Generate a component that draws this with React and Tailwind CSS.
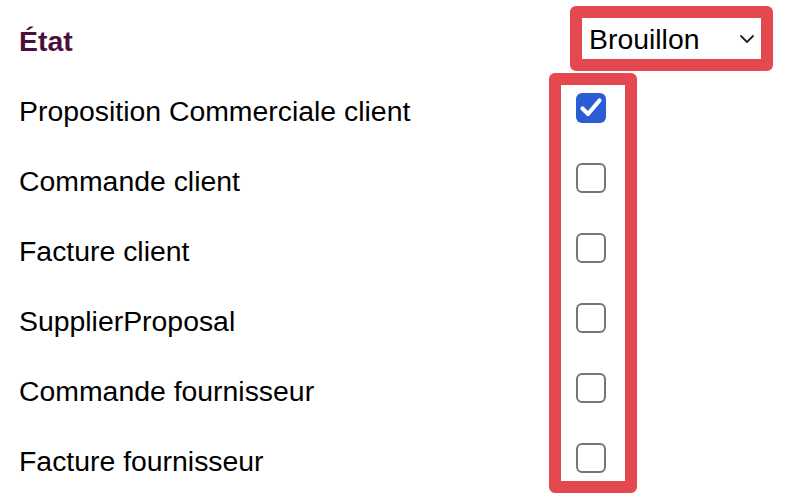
import React from "react";

const rows = [
  { label: "Proposition Commerciale client", checked: true },
  { label: "Commande client", checked: false },
  { label: "Facture client", checked: false },
  { label: "SupplierProposal", checked: false },
  { label: "Commande fournisseur", checked: false },
  { label: "Facture fournisseur", checked: false },
];

function Checkbox({ checked }) {
  if (checked) {
    return (
      <div className="w-[30px] h-[30px] rounded-[6px] bg-[#2a5cd6] flex items-center justify-center">
        <svg width="26" height="26" viewBox="0 0 26 26" fill="none">
          <path d="M4.5 13.5 L10 19 L21.5 5.5" stroke="white" strokeWidth="4.2" strokeLinecap="round" strokeLinejoin="round" />
        </svg>
      </div>
    );
  }
  return <div className="w-[30px] h-[30px] rounded-[6px] border-2 border-[#767676] bg-white"></div>;
}

export default function App() {
  return (
    <div className="w-[800px] h-[498px] bg-white text-black text-[28.4px] font-['Liberation_Sans',Arial,sans-serif] overflow-hidden">
      {/* Header: État + select */}
      <div className="flex items-center h-[65px] mt-[6px]">
        <div className="pl-[19px] pt-[6px] font-bold text-[#4a0f3d]">État</div>
        <div className="ml-auto mr-[27px] w-[203px] h-[65px] border-[12px] border-[#e4494f] rounded-[6px] bg-white">
          <div className="h-full flex items-center justify-between pl-[7px] pr-[6px]">
            <span className="leading-none pt-[1px]">Brouillon</span>
            <svg width="16" height="10" viewBox="0 0 16 10" fill="none">
              <path d="M2 2 L8 8 L14 2" stroke="#222" strokeWidth="1.8" strokeLinecap="round" strokeLinejoin="round" />
            </svg>
          </div>
        </div>
      </div>

      {/* Rows */}
      <div className="flex mt-[2px]">
        <div className="w-[549px] pl-[19px] flex flex-col">
          {rows.map((r) => (
            <div key={r.label} className="h-[70px] flex items-center pt-[7px]">
              {r.label}
            </div>
          ))}
        </div>
        <div className="w-[88px] border-[12px] border-[#e4494f] rounded-[6px] pt-[8px] pb-[7px] pl-[15px] flex flex-col gap-[40px]">
          {rows.map((r) => (
            <Checkbox key={r.label} checked={r.checked} />
          ))}
        </div>
      </div>
    </div>
  );
}
